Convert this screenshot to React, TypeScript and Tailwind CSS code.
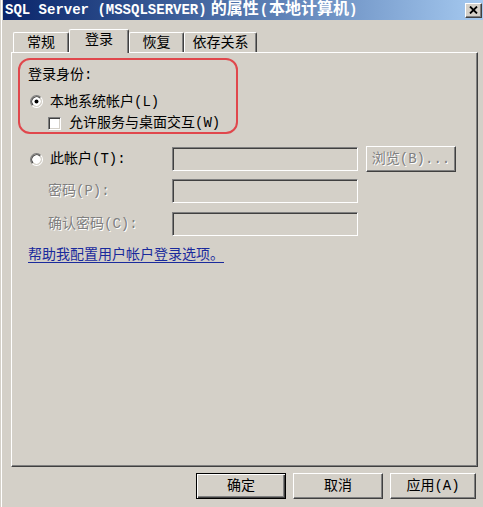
import React from "react";

const FONT = "font-['Liberation_Mono','Noto_Sans_CJK_SC',monospace]";

function Radio({ checked }: { checked?: boolean }) {
  return (
    <svg width="13" height="13" viewBox="0 0 12 12" className="shrink-0">
      <circle cx="6" cy="6" r="4.2" fill="#fff" />
      <path d="M2.11 9.89 A5.5 5.5 0 0 1 9.89 2.11" stroke="#808080" strokeWidth="1" fill="none" />
      <path d="M9.89 2.11 A5.5 5.5 0 0 1 2.11 9.89" stroke="#fff" strokeWidth="1" fill="none" />
      <path d="M2.82 9.18 A4.5 4.5 0 0 1 9.18 2.82" stroke="#404040" strokeWidth="1" fill="none" />
      <path d="M9.18 2.82 A4.5 4.5 0 0 1 2.82 9.18" stroke="#d4d0c8" strokeWidth="1" fill="none" />
      {checked && <circle cx="6" cy="6" r="1.8" fill="#000" />}
    </svg>
  );
}

function Checkbox() {
  return (
    <div className="w-[13px] h-[13px] shrink-0 bg-white border-t border-l border-t-[#808080] border-l-[#808080] border-r border-b border-r-white border-b-white shadow-[inset_1px_1px_0_#404040,inset_-1px_-1px_0_#d4d0c8]" />
  );
}

function TextBox() {
  return (
    <div className="w-[186px] h-[24px] shrink-0 bg-[#d4d0c8] border-t border-l border-t-[#808080] border-l-[#808080] border-r border-b border-r-white border-b-white shadow-[inset_1px_1px_0_#404040,inset_-1px_-1px_0_#d4d0c8]" />
  );
}

function Button({
  children,
  def,
  w,
  disabled,
}: {
  children: React.ReactNode;
  def?: boolean;
  w: string;
  disabled?: boolean;
}) {
  return (
    <div
      className={
        "h-[26px] shrink-0 flex items-center justify-center bg-[#d4d0c8] " +
        w +
        (def
          ? " border border-black shadow-[inset_1px_1px_0_#fff,inset_-1px_-1px_0_#404040,inset_-2px_-2px_0_#808080]"
          : " border-t border-l border-t-white border-l-white border-r border-b border-r-[#404040] border-b-[#404040] shadow-[inset_-1px_-1px_0_#808080]") +
        (disabled ? " text-[#808080] [text-shadow:1px_1px_0_#fff]" : " text-black")
      }
    >
      {children}
    </div>
  );
}

function Tab({ label, selected, w }: { label: string; selected?: boolean; w: string }) {
  return (
    <div
      className={
        "flex items-center justify-center bg-[#d4d0c8] border-t border-l border-t-white border-l-white border-r border-r-[#404040] rounded-tl-[2px] rounded-tr-[2px] shadow-[inset_-1px_0_0_#808080] shrink-0 " +
        w +
        (selected ? " h-[24px] -mb-[1px] z-10 pb-[3px]" : " h-[20px]")
      }
    >
      {label}
    </div>
  );
}

export default function App() {
  return (
    <div
      className={
        "w-[483px] h-[507px] bg-[#d4d0c8] overflow-hidden flex flex-col pl-[3px] text-[14px] leading-[16px] text-black relative " +
        FONT
      }
    >
      <div className="absolute left-[1px] top-0 bottom-0 w-px bg-white" />
      {/* Title bar */}
      <div className="h-[20px] shrink-0 flex items-center justify-between bg-gradient-to-r from-[#0a246a] to-[#a6caf0] pl-[2px] pr-[1px]">
        <span className="text-white font-bold text-[14px] whitespace-nowrap flex items-center">
          <span>SQL Server (MSSQLSERVER)</span>
          <span className="ml-[4px] text-[16px]">的属性</span>
          <span className="mx-[1px]">(</span>
          <span className="text-[16px]">本地计算机</span>
          <span>)</span>
        </span>
        <div className="w-[17px] h-[15px] flex items-center justify-center bg-[#d4d0c8] border-t border-l border-t-white border-l-white border-r border-b border-r-[#404040] border-b-[#404040] shadow-[inset_-1px_-1px_0_#808080]">
          <svg width="9" height="8" viewBox="0 0 9 8">
            <path d="M1 0.5 L8 7.5 M8 0.5 L1 7.5" stroke="#000" strokeWidth="1.8" />
          </svg>
        </div>
      </div>

      {/* Tabs */}
      <div className="mt-[9px] h-[23px] shrink-0 flex items-end pl-[10px] relative">
        <Tab label="常规" w="w-[56px]" />
        <Tab label="登录" w="w-[60px]" selected />
        <Tab label="恢复" w="w-[55px]" />
        <Tab label="依存关系" w="w-[73px]" />
      </div>

      {/* Panel */}
      <div className="ml-[8px] w-[467px] h-[415px] shrink-0 border-t border-l border-t-white border-l-white border-r border-b border-r-[#404040] border-b-[#404040] shadow-[inset_-1px_-1px_0_#808080] flex flex-col pt-[5px]">
        {/* red highlight group */}
        <div className="ml-[6px] w-[220px] h-[76px] border-2 border-[#e0474c] rounded-[12px] flex flex-col pt-[6px]">
          <div className="h-[18px] flex items-center pl-[8px]">登录身份:</div>
          <div className="mt-[9px] h-[18px] flex items-center pl-[10px]">
            <Radio checked />
            <span className="ml-[7px]">本地系统帐户(L)</span>
          </div>
          <div className="mt-[4px] h-[18px] flex items-center pl-[28px]">
            <Checkbox />
            <span className="ml-[8px]">允许服务与桌面交互(W)</span>
          </div>
        </div>

        {/* This account */}
        <div className="mt-[13px] h-[24px] flex items-center">
          <div className="w-[160px] flex items-center pl-[18px] shrink-0">
            <Radio />
            <span className="ml-[7px]">此帐户(T):</span>
          </div>
          <TextBox />
          <div className="ml-[8px]">
            <Button w="w-[90px]" disabled>
              浏览(B)...
            </Button>
          </div>
        </div>

        <div className="mt-[8px] h-[24px] flex items-center">
          <div className="w-[160px] pl-[36px] shrink-0 text-[#808080] [text-shadow:1px_1px_0_#fff]">密码(P):</div>
          <TextBox />
        </div>

        <div className="mt-[9px] h-[24px] flex items-center">
          <div className="w-[160px] pl-[36px] shrink-0 text-[#808080] [text-shadow:1px_1px_0_#fff]">确认密码(C):</div>
          <TextBox />
        </div>

        <div className="mt-[11px] pl-[16px] h-[16px]">
          <span className="text-[#1a2a9c] underline underline-offset-[3px]">帮助我配置用户帐户登录选项。</span>
        </div>
      </div>

      {/* Bottom buttons */}
      <div className="mt-[6px] flex pl-[193px] gap-[7px]">
        <Button w="w-[90px]" def>
          确定
        </Button>
        <Button w="w-[90px]">取消</Button>
        <Button w="w-[86px]">应用(A)</Button>
      </div>
    </div>
  );
}
